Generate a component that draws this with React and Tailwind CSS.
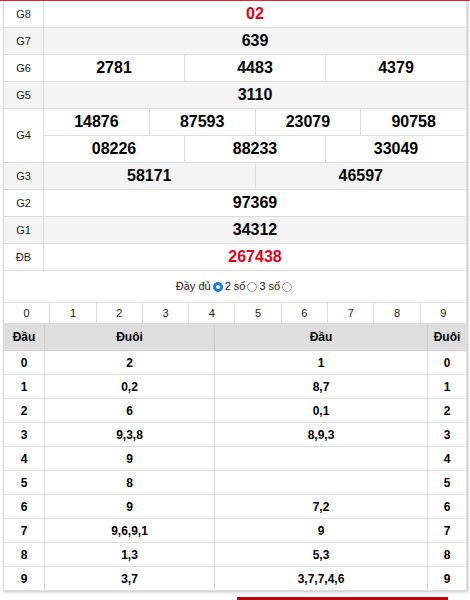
import React from "react";

const font = { fontFamily: '"Liberation Sans", Arial, sans-serif' };

const results = [
  { label: "G8", rows: [["02"]], red: true },
  { label: "G7", rows: [["639"]] },
  { label: "G6", rows: [["2781", "4483", "4379"]] },
  { label: "G5", rows: [["3110"]] },
  { label: "G4", rows: [["14876", "87593", "23079", "90758"], ["08226", "88233", "33049"]] },
  { label: "G3", rows: [["58171", "46597"]] },
  { label: "G2", rows: [["97369"]] },
  { label: "G1", rows: [["34312"]] },
  { label: "ĐB", rows: [["267438"]], red: true },
];

const loto = [
  ["0", "2", "1", "0"],
  ["1", "0,2", "8,7", "1"],
  ["2", "6", "0,1", "2"],
  ["3", "9,3,8", "8,9,3", "3"],
  ["4", "9", "", "4"],
  ["5", "8", "", "5"],
  ["6", "9", "7,2", "6"],
  ["7", "9,6,9,1", "9", "7"],
  ["8", "1,3", "5,3", "8"],
  ["9", "3,7", "3,7,7,4,6", "9"],
];

const Radio = ({ checked }) => (
  <span
    className={
      checked
        ? "inline-flex items-center justify-center w-[10px] h-[10px] rounded-full bg-[#1e7be6] mx-[2px]"
        : "inline-block w-[10px] h-[10px] rounded-full border border-[#999] bg-white mx-[2px]"
    }
  >
    {checked && <span className="w-[4px] h-[4px] rounded-full bg-white" />}
  </span>
);

const ResultRow = ({ item, i }) => {
  const bg = i % 2 === 1 ? "bg-[#f4f4f4]" : "bg-white";
  return (
    <div className={`flex border-b border-[#dcdcdc] ${bg}`}>
      <div className="w-[40px] shrink-0 flex items-center justify-center text-[11px] text-[#222] border-r border-[#dcdcdc]">
        {item.label}
      </div>
      <div className="flex-1 flex flex-col">
        {item.rows.map((row, r) => (
          <div
            key={r}
            className={`flex ${r < item.rows.length - 1 ? "h-[27px] border-b border-[#dcdcdc]" : "h-[26px]"}`}
          >
            {row.map((n, c) => (
              <div
                key={c}
                className={`flex-1 flex items-center justify-center text-[16px] font-bold ${
                  item.red ? "text-[#e3001b]" : "text-black"
                } ${c > 0 ? "border-l border-[#dcdcdc]" : ""}`}
              >
                {n}
              </div>
            ))}
          </div>
        ))}
      </div>
    </div>
  );
};

export default function App() {
  return (
    <div className="w-[470px] h-[600px] bg-white overflow-hidden border-t border-[#e8202a]" style={font}>
      <div className="ml-[3px] w-[464px] border-x border-[#dcdcdc] shadow-[1px_1px_3px_rgba(0,0,0,0.25)]">
        <div>
          {results.map((item, i) => (
            <ResultRow key={item.label} item={item} i={i} />
          ))}
        </div>

        <div className="h-[31px] flex items-center justify-center text-[11px] text-[#222]">
          <span>Đầy đủ</span>
          <Radio checked />
          <span>2 số</span>
          <Radio />
          <span>3 số</span>
          <Radio />
        </div>

        <div className="flex h-[22px] border-y border-[#dcdcdc]">
          {["0", "1", "2", "3", "4", "5", "6", "7", "8", "9"].map((d, i) => (
            <div
              key={d}
              className={`flex-1 flex items-center justify-center text-[11px] text-[#222] ${
                i > 0 ? "border-l border-[#dcdcdc]" : ""
              }`}
            >
              {d}
            </div>
          ))}
        </div>

        <div className="flex h-[27px] bg-[#dedede] border-b border-[#d0d0d0] text-[12px] font-bold text-black">
          <div className="w-[40px] flex items-center justify-center">Đầu</div>
          <div className="w-[170px] flex items-center justify-center border-l border-[#cfcfcf]">Đuôi</div>
          <div className="flex-1 flex items-center justify-center border-l border-[#cfcfcf]">Đầu</div>
          <div className="w-[39px] flex items-center justify-center border-l border-[#cfcfcf]">Đuôi</div>
        </div>

        {loto.map((r, i) => (
          <div key={i} className="flex h-[24px] border-b border-[#dcdcdc] text-[12px] font-bold text-black">
            <div className="w-[40px] flex items-center justify-center">{r[0]}</div>
            <div className="w-[170px] flex items-center justify-center border-l border-[#dcdcdc]">{r[1]}</div>
            <div className="flex-1 flex items-center justify-center border-l border-[#dcdcdc]">{r[2]}</div>
            <div className="w-[39px] flex items-center justify-center border-l border-[#dcdcdc]">{r[3]}</div>
          </div>
        ))}
      </div>
      <div className="mt-[6px] ml-[237px] w-[211px] h-[4px] bg-[#c0000c]" />
    </div>
  );
}
